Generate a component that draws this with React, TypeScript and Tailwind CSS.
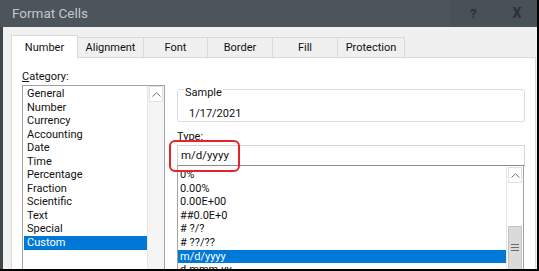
const categories = [
  "General",
  "Number",
  "Currency",
  "Accounting",
  "Date",
  "Time",
  "Percentage",
  "Fraction",
  "Scientific",
  "Text",
  "Special",
  "Custom",
];

const types = ["0%", "0.00%", "0.00E+00", "##0.0E+0", "# ?/?", "# ??/??", "m/d/yyyy", "d-mmm-yy"];

const tabs = [
  { label: "Number", w: "w-[67px]" },
  { label: "Alignment", w: "w-[66px]" },
  { label: "Font", w: "w-[64px]" },
  { label: "Border", w: "w-[65px]" },
  { label: "Fill", w: "w-[65px]" },
  { label: "Protection", w: "w-[67px]" },
];

function Chevron() {
  return (
    <svg width="9" height="5" viewBox="0 0 9 5" fill="none">
      <polyline points="0.5,4.5 4.5,0.8 8.5,4.5" stroke="#707070" strokeWidth="1" />
    </svg>
  );
}

function Grip() {
  return (
    <svg width="8" height="7" viewBox="0 0 8 7">
      <rect x="0" y="0" width="8" height="1" fill="#6a6a6a" />
      <rect x="0" y="3" width="8" height="1" fill="#6a6a6a" />
      <rect x="0" y="6" width="8" height="1" fill="#6a6a6a" />
    </svg>
  );
}

export default function App() {
  return (
    <div
      className="w-[539px] h-[271px] overflow-hidden flex flex-col bg-[#f0f0f0] border-r-2 border-b-2 border-black text-[11px] text-[#111]"
      style={{ fontFamily: 'Roboto, "Noto Sans", sans-serif' }}
    >
      {/* title bar */}
      <div className="h-[27px] shrink-0 flex items-center bg-[#4b555b]">
        <span className="pl-[12px] text-[13.5px] text-[#c3c8ca] flex-1">Format Cells</span>
        <div className="w-[47px] h-full flex items-center justify-center bg-[#475156] text-[#2a3033] font-bold text-[13px]">
          ?
        </div>
        <div className="w-[40px] h-full flex items-center justify-center bg-[#475156] text-[#2a3033] font-bold text-[14px]">
          X
        </div>
      </div>

      <div className="flex-1 flex flex-col border-l-[3px] border-[#3f474b] pl-[8px] pr-[1px] pt-[8px]">
        {/* tabs */}
        <div className="flex items-end h-[22px] shrink-0">
          {tabs.map((t, i) =>
            i === 0 ? (
              <div
                key={t.label}
                className={`${t.w} h-[23px] -mb-[1px] pt-[3px] relative z-10 flex items-center justify-center bg-white border-l border-t border-r border-[#d9d9d9]`}
              >
                {t.label}
              </div>
            ) : (
              <div
                key={t.label}
                className={`${t.w} h-[20px] pt-[2px] flex items-center justify-center bg-[#f0f0f0] border-t border-r border-[#d9d9d9]`}
              >
                {t.label}
              </div>
            )
          )}
        </div>

        {/* panel */}
        <div className="flex-1 bg-white border border-[#d9d9d9] flex gap-[12px] pl-[10px]">
          {/* category column */}
          <div className="w-[143px] pt-[12px] flex flex-col">
            <div className="h-[14px] leading-[14px] mb-[1px]">
              <span className="underline">C</span>ategory:
            </div>
            <div className="flex-1 flex border border-[#a3a3a3] border-b-0">
              <div className="flex-1 pt-[1px] pl-[1px]">
                {categories.map((c) => (
                  <div
                    key={c}
                    className={`h-[13.55px] leading-[13.55px] pl-[3px] ${
                      c === "Custom" ? "bg-[#0078d7] text-white" : ""
                    }`}
                  >
                    {c}
                  </div>
                ))}
              </div>
              <div className="w-[17px] flex flex-col bg-[#f5f5f5] border-l border-[#e6e6e6]">
                <div className="h-[16px] m-[1px] mt-0 flex items-center justify-center bg-white border border-[#e0e0e0]">
                  <Chevron />
                </div>
              </div>
            </div>
          </div>

          {/* right column */}
          <div className="w-[348px] pt-[31px] flex flex-col relative">
            <div className="h-[33px] border border-[#dcdcdc] rounded-[3px] flex flex-col">
              <span className="-mt-[4px] ml-[6px] px-[1px] bg-white self-start leading-[14px]">Sample</span>
              <span className="ml-[11px] mt-[7px] leading-[14px]">1/17/2021</span>
            </div>
            <div className="mt-[8px] h-[14px] leading-[14px]">Type:</div>
            <div className="mt-[1px] h-[21px] border border-[#d5d5d5] border-b-[#8a8a8a] flex items-center pl-[3px] text-[11.5px]">
              m/d/yyyy
            </div>
            <div className="flex-1 flex border-l border-r border-[#a3a3a3] mr-[1px]">
              <div className="flex-1 pt-[2px]">
                {types.map((t) => (
                  <div
                    key={t}
                    className={`h-[13.6px] leading-[13.6px] pl-[2px] ${
                      t === "m/d/yyyy" ? "bg-[#0078d7] text-white" : ""
                    }`}
                  >
                    {t}
                  </div>
                ))}
              </div>
              <div className="w-[17px] flex flex-col bg-white border-l border-[#e6e6e6]">
                <div className="h-[16px] mx-[1px] mt-[1px] flex items-center justify-center bg-white border border-[#e0e0e0]">
                  <Chevron />
                </div>
                <div className="h-[43px]" />
                <div className="flex-1 mx-[1px] flex justify-center pt-[17px] bg-[#dadada] border border-[#c4c4c4]">
                  <Grip />
                </div>
              </div>
            </div>
            {/* red callout around the type box */}
            <div className="absolute left-[-8px] top-[82px] w-[71px] h-[32px] border-2 border-[#e3242b] rounded-[6px]" />
          </div>
        </div>
      </div>
    </div>
  );
}
